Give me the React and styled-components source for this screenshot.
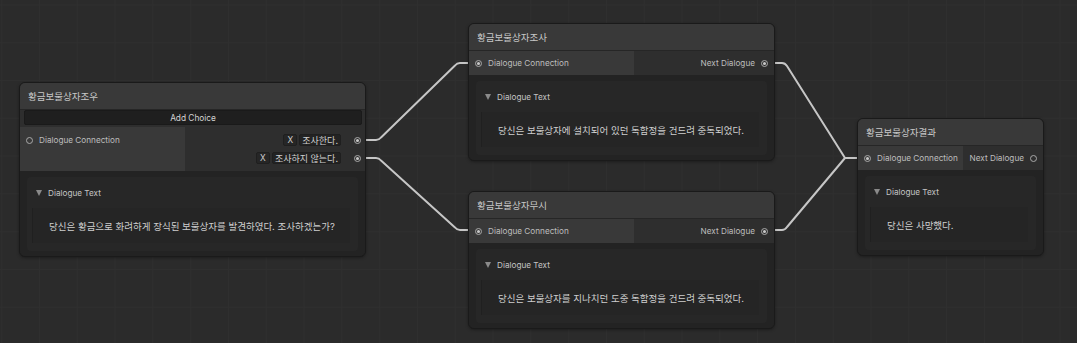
import React from 'react'
import styled, { createGlobalStyle } from 'styled-components'

const GlobalStyle = createGlobalStyle`
    body {
        margin: 0;
        background: #2b2b2b;
        font-family: "Inter", "Noto Sans CJK KR", sans-serif;
    }
`;

const Canvas = styled.div`
    position: relative;
    width: 1077px;
    height: 343px;
    overflow: hidden;
    background-color: #2b2b2b;
    background-image:
        linear-gradient(to right, #2f2f2f 1px, transparent 1px),
        linear-gradient(to bottom, #2f2f2f 1px, transparent 1px);
    background-size: 37.8px 37.8px;
    background-position: 1.2px 4.4px;
`;

const EdgeLayer = styled.svg`
    position: absolute;
    left: 0;
    top: 0;
`;

const NodeBox = styled.div`
    position: absolute;
    left: ${p => p.$x}px;
    top: ${p => p.$y}px;
    width: ${p => p.$w}px;
    box-sizing: border-box;
    display: flex;
    flex-direction: column;
    background: #232323;
    border: 1px solid #1a1a1a;
    border-radius: 6px;
    overflow: hidden;
    box-shadow: 0 1px 3px rgba(0,0,0,0.35);
`;

const TitleBar = styled.div`
    height: 27px;
    display: flex;
    align-items: center;
    padding: 0 8px;
    background: #393939;
    color: #c8c8c8;
    font-size: 9.5px;
    border-bottom: 1px solid #262626;
    box-sizing: border-box;
`;

const ChoiceBar = styled.div`
    padding: 0 3px 2px 4px;
    background: #2e2e2e;
`;

const AddButton = styled.div`
    height: 15px;
    display: flex;
    align-items: center;
    justify-content: center;
    background: #1f1f1f;
    border: 1px solid #1a1a1a;
    border-radius: 2px;
    color: #d4d4d4;
    font-size: 8.3px;
    box-sizing: border-box;
`;

const PortsRow = styled.div`
    display: flex;
    min-height: 24px;
`;

const InputSide = styled.div`
    width: ${p => p.$w}px;
    background: #393939;
    padding: ${p => p.$pad}px 0;
    display: flex;
    flex-direction: column;
    justify-content: ${p => p.$pad ? 'flex-start' : 'center'};
`;

const OutputSide = styled.div`
    flex: 1;
    background: #2e2e2e;
    padding: ${p => p.$pad}px 0;
    display: flex;
    flex-direction: column;
    align-items: flex-end;
    justify-content: ${p => p.$pad ? 'flex-start' : 'center'};
`;

const PortLine = styled.div`
    height: 18px;
    display: flex;
    align-items: center;
    gap: ${p => p.$gap || 6}px;
    padding: 0 ${p => p.$padR || 6}px 0 6px;
    color: #bdbdbd;
    font-size: 8.2px;
    white-space: nowrap;
`;

const PortDot = styled.span`
    width: 7px;
    height: 7px;
    border: 1px solid #a8a8a8;
    border-radius: 50%;
    box-sizing: border-box;
    display: flex;
    align-items: center;
    justify-content: center;
    flex-shrink: 0;
    &::after {
        content: '';
        width: 3px;
        height: 3px;
        border-radius: 50%;
        background: ${p => p.$on ? '#c8c8c8' : 'transparent'};
    }
`;

const SmallButton = styled.span`
    height: 12px;
    width: 14px;
    display: flex;
    align-items: center;
    justify-content: center;
    background: #262626;
    border: 1px solid #1f1f1f;
    border-radius: 2px;
    color: #d0d0d0;
    font-size: 8.3px;
    box-sizing: border-box;
`;

const ChoiceField = styled.span`
    height: 12px;
    padding: 0 2px;
    display: flex;
    align-items: center;
    background: #232323;
    border: 1px solid #1f1f1f;
    border-radius: 2px;
    color: #d0d0d0;
    font-size: 9px;
    box-sizing: border-box;
`;

const PortSpacer = styled.span`
    width: 9px;
`;

const Extension = styled.div`
    padding: 6px 7px 5px;
    background: #232323;
`;

const Foldout = styled.div`
    height: 74px;
    display: flex;
    flex-direction: column;
    background: #272727;
    border-radius: 4px;
`;

const FoldoutHeader = styled.div`
    height: 31px;
    display: flex;
    align-items: center;
    gap: 6px;
    padding-left: 9px;
    color: #c4c4c4;
    font-size: 8.2px;
`;

const Arrow = styled.span`
    width: 0;
    height: 0;
    border-left: 3.5px solid transparent;
    border-right: 3.5px solid transparent;
    border-top: 6px solid #8a8a8a;
`;

const TextField = styled.div`
    height: 35px;
    margin: 0 8px 0 5px;
    display: flex;
    align-items: center;
    padding-left: 16px;
    background: #252525;
    border-left: 1px solid #202020;
    color: #cfcfcf;
    font-size: 9.5px;
    white-space: nowrap;
`;

const DialogueBody = ({ text }) => (
    <Extension>
        <Foldout>
            <FoldoutHeader>
                <Arrow />
                Dialogue Text
            </FoldoutHeader>
            <TextField>{text}</TextField>
        </Foldout>
    </Extension>
)

const DialogueNode = ({ x, y, w, title, inputW, inputOn, outputOn, text }) => (
    <NodeBox $x={x} $y={y} $w={w}>
        <TitleBar>{title}</TitleBar>
        <PortsRow>
            <InputSide $w={inputW}>
                <PortLine>
                    <PortDot $on={inputOn} />
                    Dialogue Connection
                </PortLine>
            </InputSide>
            <OutputSide>
                <PortLine>
                    Next Dialogue
                    <PortDot $on={outputOn} />
                </PortLine>
            </OutputSide>
        </PortsRow>
        <DialogueBody text={text} />
    </NodeBox>
)

const choices = ['조사한다.', '조사하지 않는다.']

const ChoiceNode = () => (
    <NodeBox $x={19} $y={82} $w={347}>
        <TitleBar>황금보물상자조우</TitleBar>
        <ChoiceBar>
            <AddButton>Add Choice</AddButton>
        </ChoiceBar>
        <PortsRow>
            <InputSide $w={165} $pad={4}>
                <PortLine>
                    <PortDot />
                    Dialogue Connection
                </PortLine>
            </InputSide>
            <OutputSide $pad={4}>
                {choices.map(c => (
                    <PortLine key={c} $gap={2} $padR={4}>
                        <SmallButton>X</SmallButton>
                        <ChoiceField>{c}</ChoiceField>
                        <PortSpacer />
                        <PortDot $on />
                    </PortLine>
                ))}
            </OutputSide>
        </PortsRow>
        <DialogueBody text="당신은 황금으로 화려하게 장식된 보물상자를 발견하였다. 조사하겠는가?" />
    </NodeBox>
)

const edges = [
    'M357 140 L376 140 Q379 140 381 137.5 L455 65.5 Q457 63 460 63 L478 63',
    'M357 158 L376 158 Q379 158 381 160.5 L455 227.5 Q457 230 460 230 L478 230',
    'M765 63 L782 63 Q785 63 787 66 L845 158 L866 158',
    'M765 230 L782 230 Q785 230 787 227 L845 158',
]

const App = () => {
    return (
        <Canvas>
            <GlobalStyle />
            <EdgeLayer width="1077" height="343">
                {edges.map(d => (
                    <path key={d} d={d} fill="none" stroke="#c6c6c6" strokeWidth="2" strokeLinejoin="round" />
                ))}
            </EdgeLayer>
            <ChoiceNode />
            <DialogueNode x={468} y={23} w={307} title="황금보물상자조사" inputW={165} inputOn outputOn
                text="당신은 보물상자에 설치되어 있던 독함정을 건드려 중독되었다." />
            <DialogueNode x={468} y={191} w={307} title="황금보물상자무시" inputW={165} inputOn outputOn
                text="당신은 보물상자를 지나치던 도중 독함정을 건드려 중독되었다." />
            <DialogueNode x={857} y={118} w={187} title="황금보물상자결과" inputW={105} inputOn
                text="당신은 사망했다." />
        </Canvas>
    )
}

export default App
